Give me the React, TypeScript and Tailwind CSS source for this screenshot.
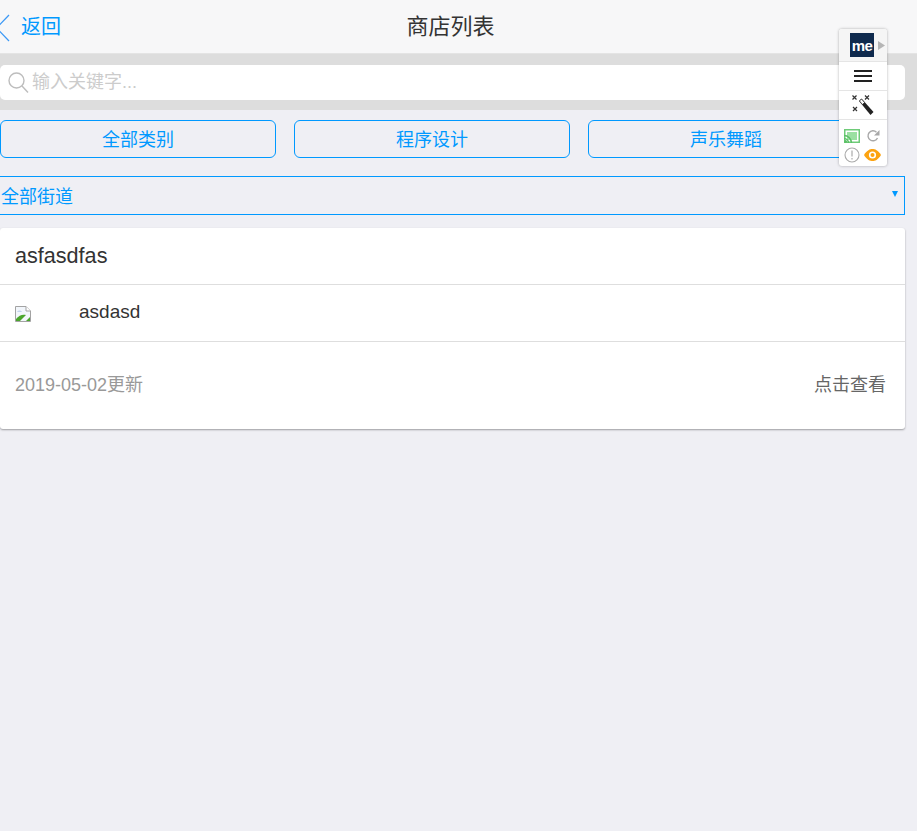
import React from "react";

const font = { fontFamily: '"Liberation Sans", "Noto Sans CJK SC", sans-serif' };

function Chip({ label }: { label: string }) {
  return (
    <div className="h-[38px] rounded-[6px] border border-[#0099ff] flex items-center justify-center pt-[2px] text-[18px] text-[#0099ff]">
      {label}
    </div>
  );
}

function BrokenImage() {
  return (
    <svg width="16" height="16" viewBox="0 0 16 16" className="shrink-0">
      <path d="M0.5 0.5H11L15.5 5V15.5H0.5Z" fill="#f2f6fb" stroke="#a3a3a3" />
      <path d="M11 0.5V5H15.5" fill="#fff" stroke="#a3a3a3" />
      <path d="M2 6c1-2 4-2 5 0H2Z" fill="#c3d4ee" />
      <path d="M1 15V13C4 9 8 8 11 9L5 15Z" fill="#4aa52c" />
      <path d="M11 15L15 11V15Z" fill="#4aa52c" />
    </svg>
  );
}

function Overlay() {
  return (
    <div className="absolute left-[839px] top-[29px] w-[48px] h-[137px] bg-white rounded-[3px] shadow-[0_0_3px_rgba(0,0,0,0.3)] flex flex-col overflow-hidden">
      <div className="h-[33px] bg-[#f5f5f5] border-b border-[#e5e5e5] flex items-center pl-[11px] gap-[4px]">
        <div className="w-[24px] h-[24px] bg-[#0f2a4d] flex items-center justify-center text-white text-[15px] font-bold leading-none tracking-[-0.5px]">me</div>
        <svg width="7" height="9" viewBox="0 0 7 9"><path d="M0 0L7 4.5L0 9Z" fill="#b5b5b5" /></svg>
      </div>
      <div className="h-[29px] border-b border-[#e5e5e5] flex items-center justify-center">
        <svg width="18" height="14" viewBox="0 0 18 14">
          <path d="M0 2H18M0 7H18M0 12H18" stroke="#222" strokeWidth="2" />
        </svg>
      </div>
      <div className="h-[29px] border-b border-[#e5e5e5] flex items-center justify-center">
        <svg width="22" height="21" viewBox="0 0 22 21">
          <path d="M0.5 0.5L4.500 4.500M4.500 0.5L0.5 4.500M13 0.500L17 4.500M17 0.500L13 4.500M1 12L5 16M5 12L1 16" stroke="#333" strokeWidth="1.2" />
          <path d="M7 6L9.500 3.500L21.500 17L18.500 20Z" fill="#222" />
          <path d="M7.500 6L9.500 4L12.500 7.500L10.500 9.500Z" fill="#fff" stroke="#222" strokeWidth="0.6" />
        </svg>
      </div>
      <div className="flex-1 flex flex-col gap-[4px] pl-[5px] pt-[8px]">
        <div className="flex items-center gap-[6px] h-[15px]">
          <svg width="16" height="14" viewBox="0 0 16 14">
            <rect x="0.75" y="0.75" width="14.5" height="12.5" fill="none" stroke="#6ecb78" strokeWidth="1.5" />
            <rect x="3" y="3" width="10" height="8" fill="#9be0a2" />
            <path d="M0 6.5A7.5 7.5 0 0 1 7.5 14M0 9.5A4.5 4.5 0 0 1 4.5 14" fill="none" stroke="#5cc067" strokeWidth="1.5" />
            <circle cx="1.5" cy="12.5" r="1.5" fill="#5cc067" />
          </svg>
          <svg width="14" height="14" viewBox="0 0 14 14">
            <path d="M11.5 9A5 5 0 1 1 10.5 3.2" fill="none" stroke="#a8a8a8" strokeWidth="1.4" />
            <path d="M13.5 1V6.5H8Z" fill="#a8a8a8" />
          </svg>
        </div>
        <div className="flex items-center gap-[4px] h-[15px]">
          <svg width="16" height="16" viewBox="0 0 16 16">
            <circle cx="8" cy="8" r="7" fill="none" stroke="#aaa" strokeWidth="1.1" />
            <path d="M8 3.5V9.5M8 11V12.5" stroke="#aaa" strokeWidth="1.2" />
          </svg>
          <svg width="17" height="12" viewBox="0 0 17 12">
            <path d="M0 6C3 1 6 0 8.500 0S14 1 17 6C14 11 11 12 8.500 12S3 11 0 6Z" fill="#fca311" />
            <circle cx="8.500" cy="6" r="3.600" fill="#fff" />
            <circle cx="8.500" cy="6" r="2" fill="#fca311" />
          </svg>
        </div>
      </div>
    </div>
  );
}

export default function App() {
  return (
    <div className="relative min-h-[831px] bg-[#efeff4] overflow-hidden" style={font}>
      <header className="relative h-[53px] bg-[#f7f7f8] flex items-center justify-center pr-[16px]">
        <div className="absolute left-0 top-0 h-full flex items-center">
          <svg width="10" height="28" viewBox="0 0 10 28" className="shrink-0 mt-[2px]">
            <path d="M9 1L-3.500 14L9 27" fill="none" stroke="#3d99f5" strokeWidth="1.3" />
          </svg>
          <span className="ml-[11px] text-[20px] text-[#0099ff]">返回</span>
        </div>
        <h1 className="text-[22px] font-normal text-[#333]">商店列表</h1>
      </header>
      <div className="h-[57px] bg-[#dddddd] pt-[12px] pr-[12px] border-t border-[#e4e4e4]">
        <div className="h-[35px] -mt-px bg-white rounded-[5px] flex items-center pl-[8px]">
          <svg width="21" height="22" viewBox="0 0 21 22" className="shrink-0">
            <circle cx="8.500" cy="8.500" r="7.500" fill="none" stroke="#bdbdbd" strokeWidth="1.4" />
            <path d="M14 14L20 20.500" stroke="#bdbdbd" strokeWidth="1.4" />
          </svg>
          <span className="ml-[3px] text-[18px] text-[#cccccc]">输入关键字...</span>
        </div>
      </div>
      <div className="pr-[12px]">
        <div className="grid grid-cols-3 gap-[18px] w-[864px] mt-[10px]">
          <Chip label="全部类别" />
          <Chip label="程序设计" />
          <Chip label="声乐舞蹈" />
        </div>
        <div className="mt-[18px] h-[39px] border border-l-0 border-[#0099ff] flex items-center justify-between pl-[1px] pt-[3px] text-[18px] text-[#0099ff] pr-[6px]">
          <span>全部街道</span>
          <span className="w-0 h-0 border-x-[3px] border-x-transparent border-t-[6px] border-t-[#0099ff] mb-[6px]" />
        </div>
        <div className="mt-[13px] bg-white rounded-[3px] shadow-[0_1px_2px_rgba(0,0,0,0.35)]">
          <div className="h-[57px] border-b border-[#dedede] flex items-center pl-[15px] text-[21.600px] text-[#333]">asfasdfas</div>
          <div className="h-[57px] border-b border-[#dedede] flex items-center pl-[15px]">
            <span className="mt-[2px]"><BrokenImage /></span>
            <span className="ml-[48px] text-[19px] text-[#333] -mt-[2px]">asdasd</span>
          </div>
          <div className="h-[87px] flex items-center justify-between pl-[15px] pr-[19px]">
            <span className="text-[18px] text-[#999999]">2019-05-02更新</span>
            <span className="text-[18px] text-[#666666]">点击查看</span>
          </div>
        </div>
      </div>
      <Overlay />
    </div>
  );
}
